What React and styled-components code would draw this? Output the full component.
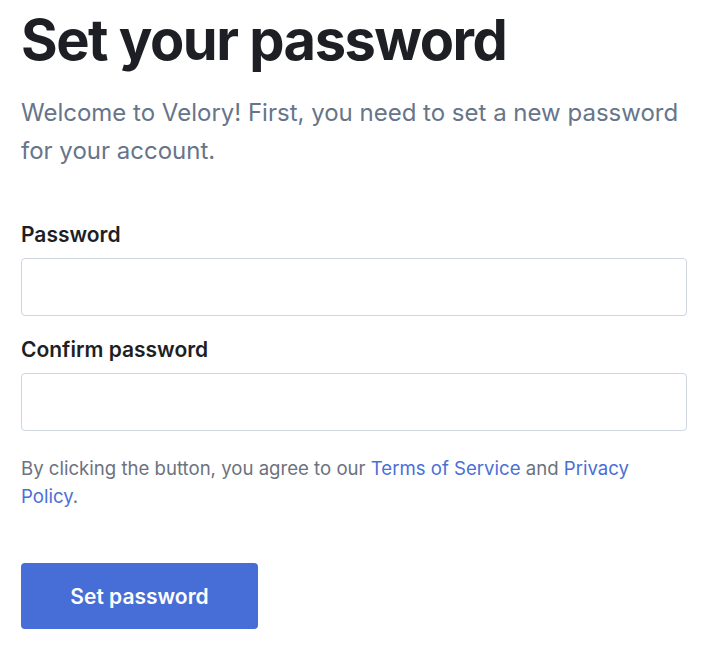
import React from "react";
import styled, { createGlobalStyle } from "styled-components";

const GlobalStyle = createGlobalStyle`
    body {
        margin: 0;
        background: #ffffff;
        font-family: Inter, "Noto Sans", sans-serif;
    }
`;

const Page = styled.div`
    width: 666px;
    padding: 0 17px 0 21px;
    display: flex;
    flex-direction: column;
`;

const Title = styled.h1`
    margin: 0;
    padding: 7px 0 0 0;
    font-size: 56px;
    font-weight: 700;
    line-height: 66px;
    letter-spacing: -1.5px;
    color: #1d1f24;
`;

const Intro = styled.p`
    margin: 21px 0 0 0;
    font-size: 24px;
    line-height: 38px;
    color: #677589;
`;

const Form = styled.form`
    margin: 51px 0 0 0;
    display: flex;
    flex-direction: column;
`;

const Field = styled.div`
    display: flex;
    flex-direction: column;
    margin: 0 0 ${(p) => p.gap || "0"} 0;
`;

const Label = styled.label`
    font-size: 21px;
    font-weight: 600;
    line-height: 28px;
    color: #1d1f24;
    margin: 0 0 9px 0;
`;

const Input = styled.input`
    box-sizing: border-box;
    width: 666px;
    height: 58px;
    border: 1px solid #cfd6e0;
    border-radius: 4px;
    padding: 0 14px;
    font-size: 18px;
    font-family: inherit;
    outline: none;
`;

const Terms = styled.p`
    margin: 23px 0 0 0;
    font-size: 18.6px;
    line-height: 28px;
    color: #6b7280;
`;

const Link = styled.a`
    color: #4a6fd6;
    text-decoration: none;
`;

const Button = styled.button`
    margin: 53px 0 0 0;
    width: 237px;
    height: 66px;
    border: none;
    border-radius: 4px;
    background: #466ed6;
    color: #ffffff;
    font-family: inherit;
    font-size: 21px;
    font-weight: 600;
    cursor: pointer;
`;

const App = () => {
    return (
        <Page>
            <GlobalStyle />
            <Title>Set your password</Title>
            <Intro>
                Welcome to Velory! First, you need to set a new password
                for your account.
            </Intro>
            <Form onSubmit={(e) => e.preventDefault()}>
                <Field gap="20px">
                    <Label>Password</Label>
                    <Input type="password" />
                </Field>
                <Field>
                    <Label>Confirm password</Label>
                    <Input type="password" />
                </Field>
                <Terms>
                    By clicking the button, you agree to our{" "}
                    <Link href="#">Terms of Service</Link> and{" "}
                    <Link href="#">Privacy Policy</Link>.
                </Terms>
                <div>
                    <Button type="submit">Set password</Button>
                </div>
            </Form>
        </Page>
    );
};

export default App;
